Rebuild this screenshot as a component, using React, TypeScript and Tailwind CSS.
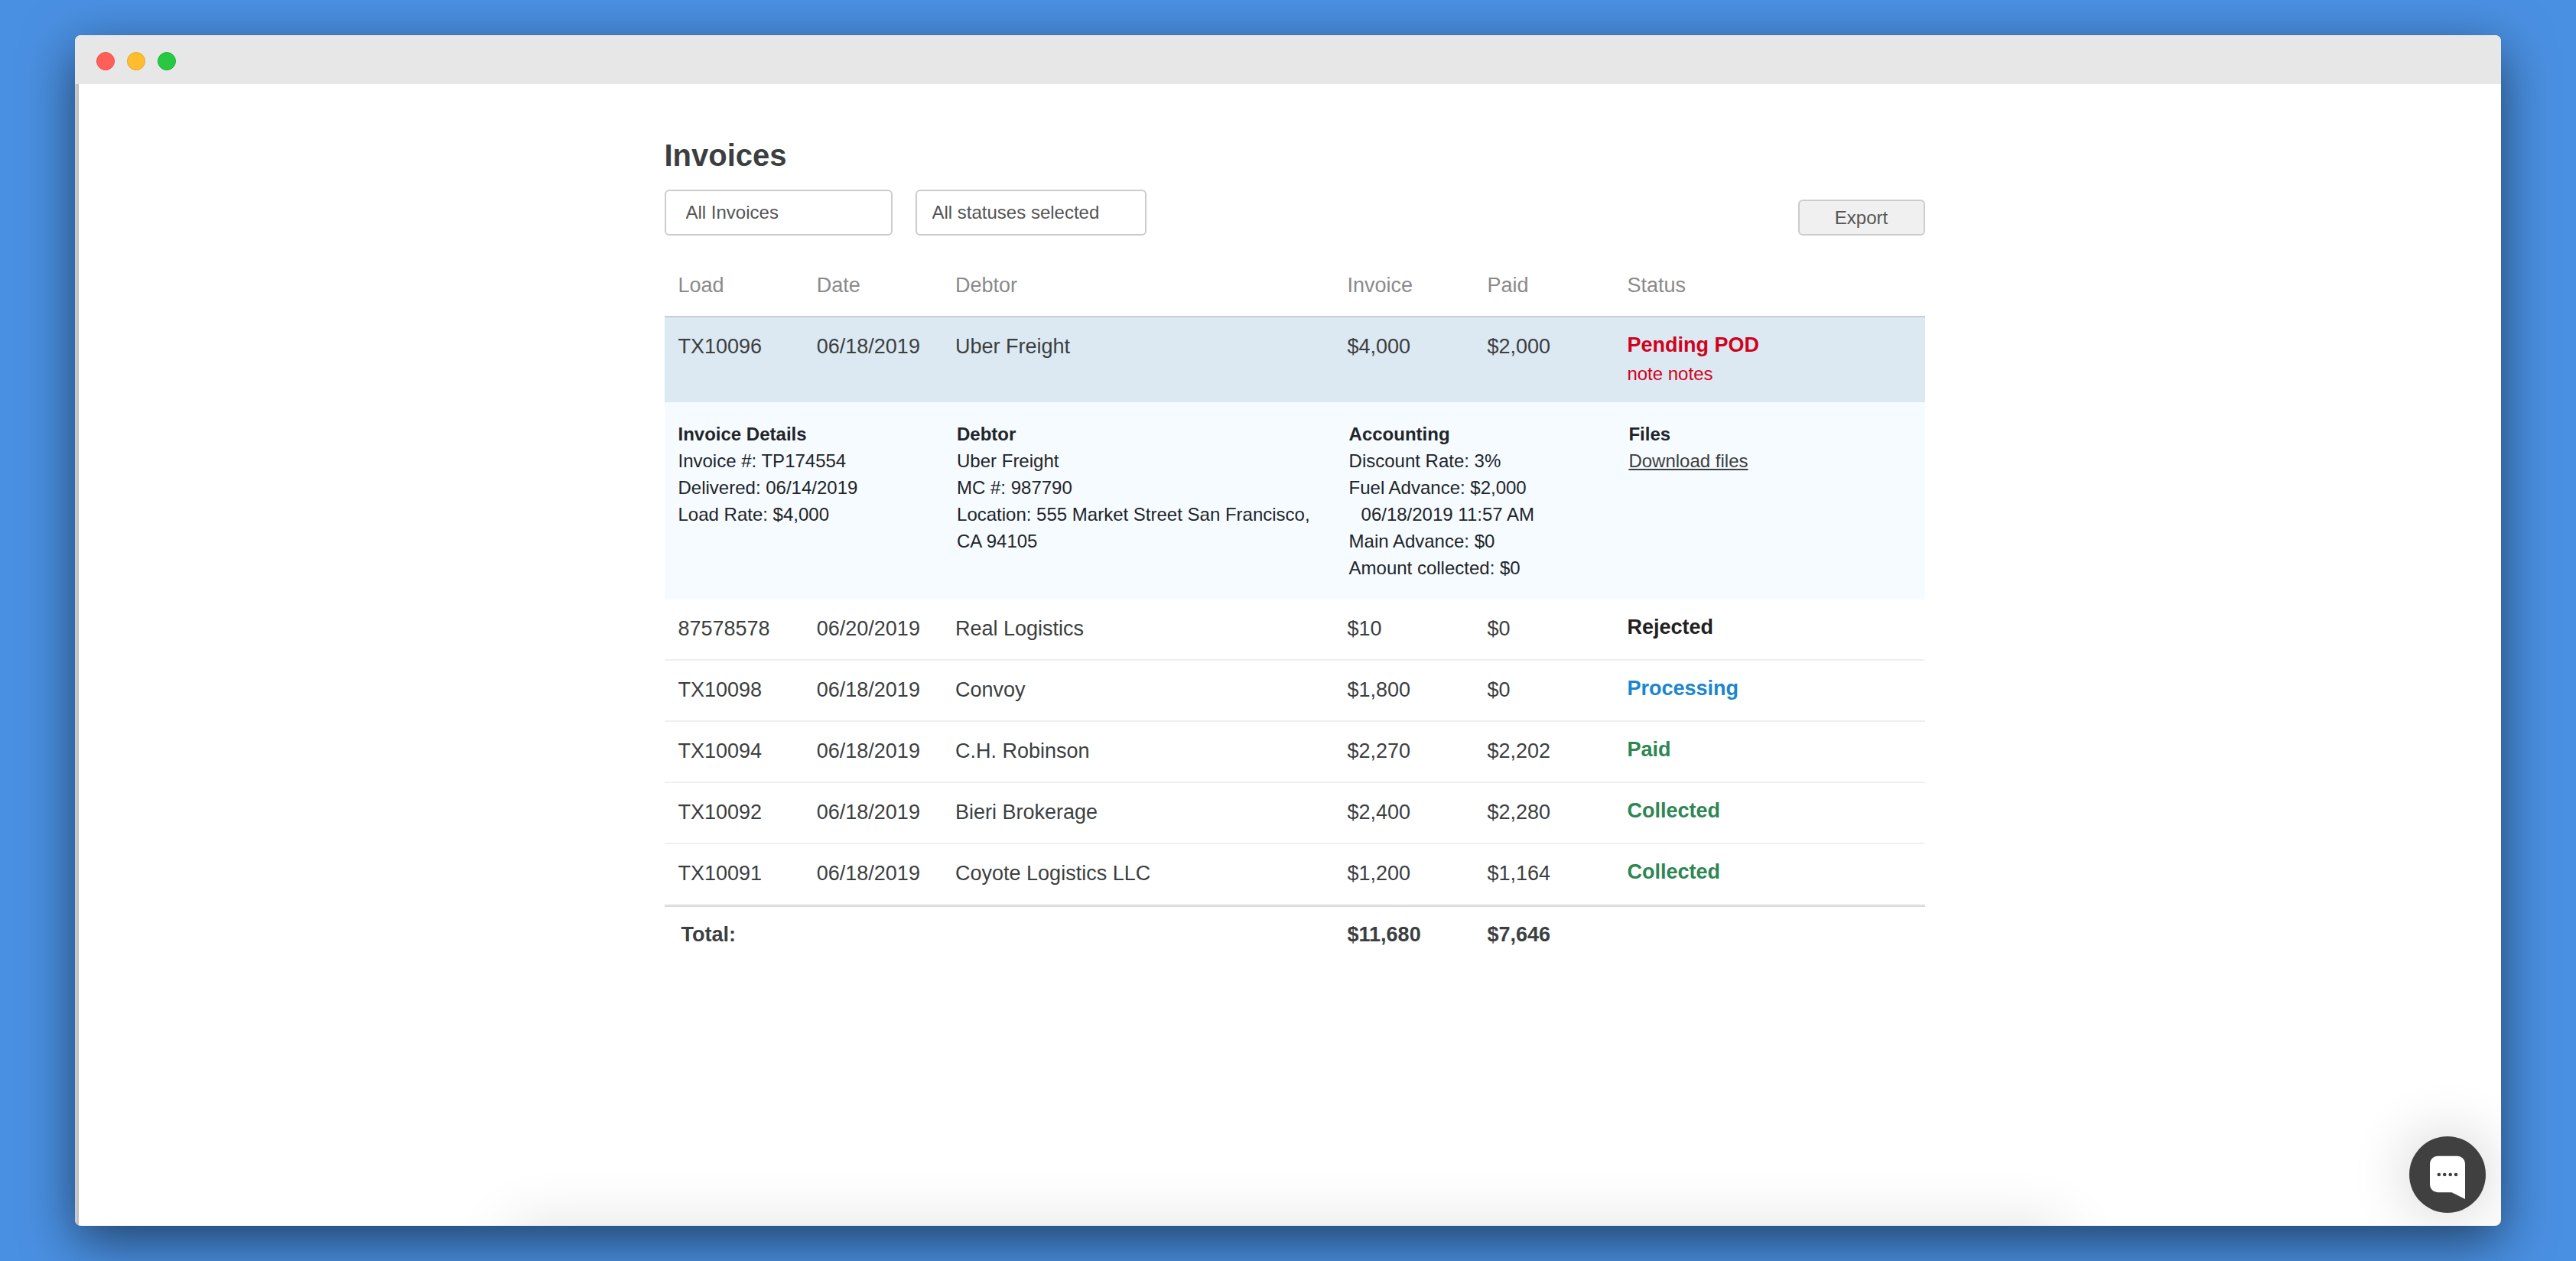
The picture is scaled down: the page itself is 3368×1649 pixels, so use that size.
import { useState } from 'react';

interface IInvoice {
  load: string;
  date: string;
  debtor: string;
  invoice: string;
  paid: string;
  status: string;
  note?: string;
}

const invoices: IInvoice[] = [
  { load: 'TX10096', date: '06/18/2019', debtor: 'Uber Freight', invoice: '$4,000', paid: '$2,000', status: 'Pending POD', note: 'note notes' },
  { load: '87578578', date: '06/20/2019', debtor: 'Real Logistics', invoice: '$10', paid: '$0', status: 'Rejected' },
  { load: 'TX10098', date: '06/18/2019', debtor: 'Convoy', invoice: '$1,800', paid: '$0', status: 'Processing' },
  { load: 'TX10094', date: '06/18/2019', debtor: 'C.H. Robinson', invoice: '$2,270', paid: '$2,202', status: 'Paid' },
  { load: 'TX10092', date: '06/18/2019', debtor: 'Bieri Brokerage', invoice: '$2,400', paid: '$2,280', status: 'Collected' },
  { load: 'TX10091', date: '06/18/2019', debtor: 'Coyote Logistics LLC', invoice: '$1,200', paid: '$1,164', status: 'Collected' }
];

const statusColors: Record<string, string> = {
  'Pending POD': 'text-[#d0021b]',
  Rejected: 'text-[#222222]',
  Processing: 'text-[#1a86d0]',
  Paid: 'text-[#2e8653]',
  Collected: 'text-[#2e8653]'
};

const headers = ['Load', 'Date', 'Debtor', 'Invoice', 'Paid', 'Status'];

function TitleBar() {
  return (
    <div className="flex h-16 shrink-0 items-center gap-4 bg-[#e7e7e7] pt-1 pl-7">
      <span className="size-6 rounded-full border border-[#e9524a] bg-[#ff5f57]" />
      <span className="size-6 rounded-full border border-[#e5a532] bg-[#ffbd2e]" />
      <span className="size-6 rounded-full border border-[#1db03c] bg-[#28c940]" />
    </div>
  );
}

function InvoiceRow({ row, open, onToggle }: { row: IInvoice; open: boolean; onToggle: () => void }) {
  const cell = `px-[18px] pt-[18px] pb-5 ${open ? '' : 'border-b-2 border-[#efefef]'}`;

  return (
    <tr onClick={onToggle} className={`cursor-pointer align-top ${open ? 'bg-[#dce9f2]' : ''}`}>
      <td className={cell}>{row.load}</td>
      <td className={`${cell} whitespace-nowrap`}>{row.date}</td>
      <td className={cell}>{row.debtor}</td>
      <td className={cell}>{row.invoice}</td>
      <td className={cell}>{row.paid}</td>
      <td className={`px-[18px] pt-4 pb-5 ${open ? '' : 'border-b-2 border-[#efefef]'} ${statusColors[row.status]}`}>
        <div className="font-bold">{row.status}</div>
        {row.note && <div className="text-[24px] leading-[35px]">{row.note}</div>}
      </td>
    </tr>
  );
}

function DetailRow() {
  return (
    <tr className="bg-[#f6fbff] align-top text-[24px] leading-[35px] text-[#212529]">
      <td colSpan={2} className="px-[18px] py-6">
        <h2 className="font-bold">Invoice Details</h2>
        <p>Invoice #: TP174554</p>
        <p>Delivered: 06/14/2019</p>
        <p>Load Rate: $4,000</p>
      </td>
      <td className="py-6 pr-3 pl-5">
        <h2 className="font-bold">Debtor</h2>
        <p>Uber Freight</p>
        <p>MC #: 987790</p>
        <p>Location: 555 Market Street San Francisco, CA 94105</p>
      </td>
      <td colSpan={2} className="py-6 pr-3 pl-5">
        <h2 className="font-bold">Accounting</h2>
        <p>Discount Rate: 3%</p>
        <p>Fuel Advance: $2,000</p>
        <p className="pl-4">06/18/2019 11:57 AM</p>
        <p>Main Advance: $0</p>
        <p>Amount collected: $0</p>
      </td>
      <td className="py-6 pr-3 pl-5">
        <h2 className="font-bold">Files</h2>
        <a href="#files" className="text-[#3c3f41] underline decoration-2 underline-offset-2">
          Download files
        </a>
      </td>
    </tr>
  );
}

function ChatButton() {
  return (
    <button
      type="button"
      aria-label="Open chat"
      className="absolute right-5 bottom-[17px] size-[100px] rounded-full bg-[#404040] shadow-[0_0_80px_rgba(0,0,0,0.2)]"
    >
      <svg viewBox="0 0 100 100" className="size-full">
        <path
          d="M37 25.7H63A10 10 0 0 1 73 35.7V82L55.5 73.3H37A10 10 0 0 1 27 63.3V35.7A10 10 0 0 1 37 25.7Z"
          fill="#fff"
        />
        <g fill="#404040">
          <circle cx="38.8" cy="50" r="2.3" />
          <circle cx="46.2" cy="50" r="2.3" />
          <circle cx="53.7" cy="50" r="2.3" />
          <circle cx="61" cy="50" r="2.3" />
        </g>
      </svg>
    </button>
  );
}

export default function App() {
  const [openLoad, setOpenLoad] = useState('TX10096');

  return (
    <div className="flex min-h-screen flex-col bg-[#4a90e2] px-[98px] py-[46px] font-['Liberation_Sans',Arial,sans-serif]">
      <div className="relative flex grow flex-col overflow-hidden rounded-lg bg-white shadow-[0_20px_68px_rgba(0,0,0,0.55)]">
        <TitleBar />

        <div className="flex grow flex-col border-l-[3px] border-[#cacaca]">
          <main className="grow border-l-2 border-[#bebebe] pt-[69px] pr-5 pb-20 pl-8">
            <div className="mx-auto max-w-[1648px]">
              <h1 className="text-[40px] leading-[48px] font-bold text-[#3c3f41]">Invoices</h1>

              {/* Filters */}
              <div className="mt-[21px] flex items-end justify-between text-[24px] text-[#555555]">
                <div className="flex gap-[30px]">
                  <select
                    aria-label="Invoices"
                    className="h-[60px] w-[298px] appearance-none rounded-md border-2 border-[#cccccc] bg-white pl-[26px]"
                  >
                    <option>All Invoices</option>
                  </select>
                  <select
                    aria-label="Statuses"
                    className="h-[60px] w-[302px] appearance-none rounded-md border-2 border-[#cccccc] bg-white pl-5"
                  >
                    <option>All statuses selected</option>
                  </select>
                </div>
                <button type="button" className="h-[47px] w-[166px] rounded-md border-2 border-[#cccccc] bg-[#f0f0f0]">
                  Export
                </button>
              </div>

              {/* Invoice list */}
              <table className="w-full table-fixed border-separate border-spacing-0 text-left text-[27px] leading-10 text-[#3c3f41]">
                <colgroup>
                  <col className="w-[11%]" />
                  <col className="w-[11%]" />
                  <col className="w-[31.1%]" />
                  <col className="w-[11.1%]" />
                  <col className="w-[11.1%]" />
                  <col />
                </colgroup>
                <thead>
                  <tr>
                    {headers.map((header) => (
                      <th key={header} className="border-b-2 border-[#cccccc] px-[18px] pt-[45px] pb-5 font-normal text-[#8a8a8a]">
                        {header}
                      </th>
                    ))}
                  </tr>
                </thead>
                {invoices.map((row) => (
                  <tbody key={row.load}>
                    <InvoiceRow
                      row={row}
                      open={openLoad === row.load}
                      onToggle={() => setOpenLoad(openLoad === row.load ? '' : row.load)}
                    />
                    {openLoad === row.load && <DetailRow />}
                  </tbody>
                ))}
                <tfoot>
                  <tr className="font-bold">
                    <td colSpan={3} className="border-t-2 border-[#d9d9d9] pt-4 pl-[22px]">
                      Total:
                    </td>
                    <td className="border-t-2 border-[#d9d9d9] px-[18px] pt-4">$11,680</td>
                    <td className="border-t-2 border-[#d9d9d9] px-[18px] pt-4">$7,646</td>
                    <td className="border-t-2 border-[#d9d9d9]" />
                  </tr>
                </tfoot>
              </table>
            </div>
          </main>
        </div>

        {/* Soft shade rising from the bottom edge */}
        <div className="absolute inset-x-[18%] top-full h-40 shadow-[0_0_80px_rgba(0,0,0,0.12)]" />
        <ChatButton />
      </div>
    </div>
  );
}
